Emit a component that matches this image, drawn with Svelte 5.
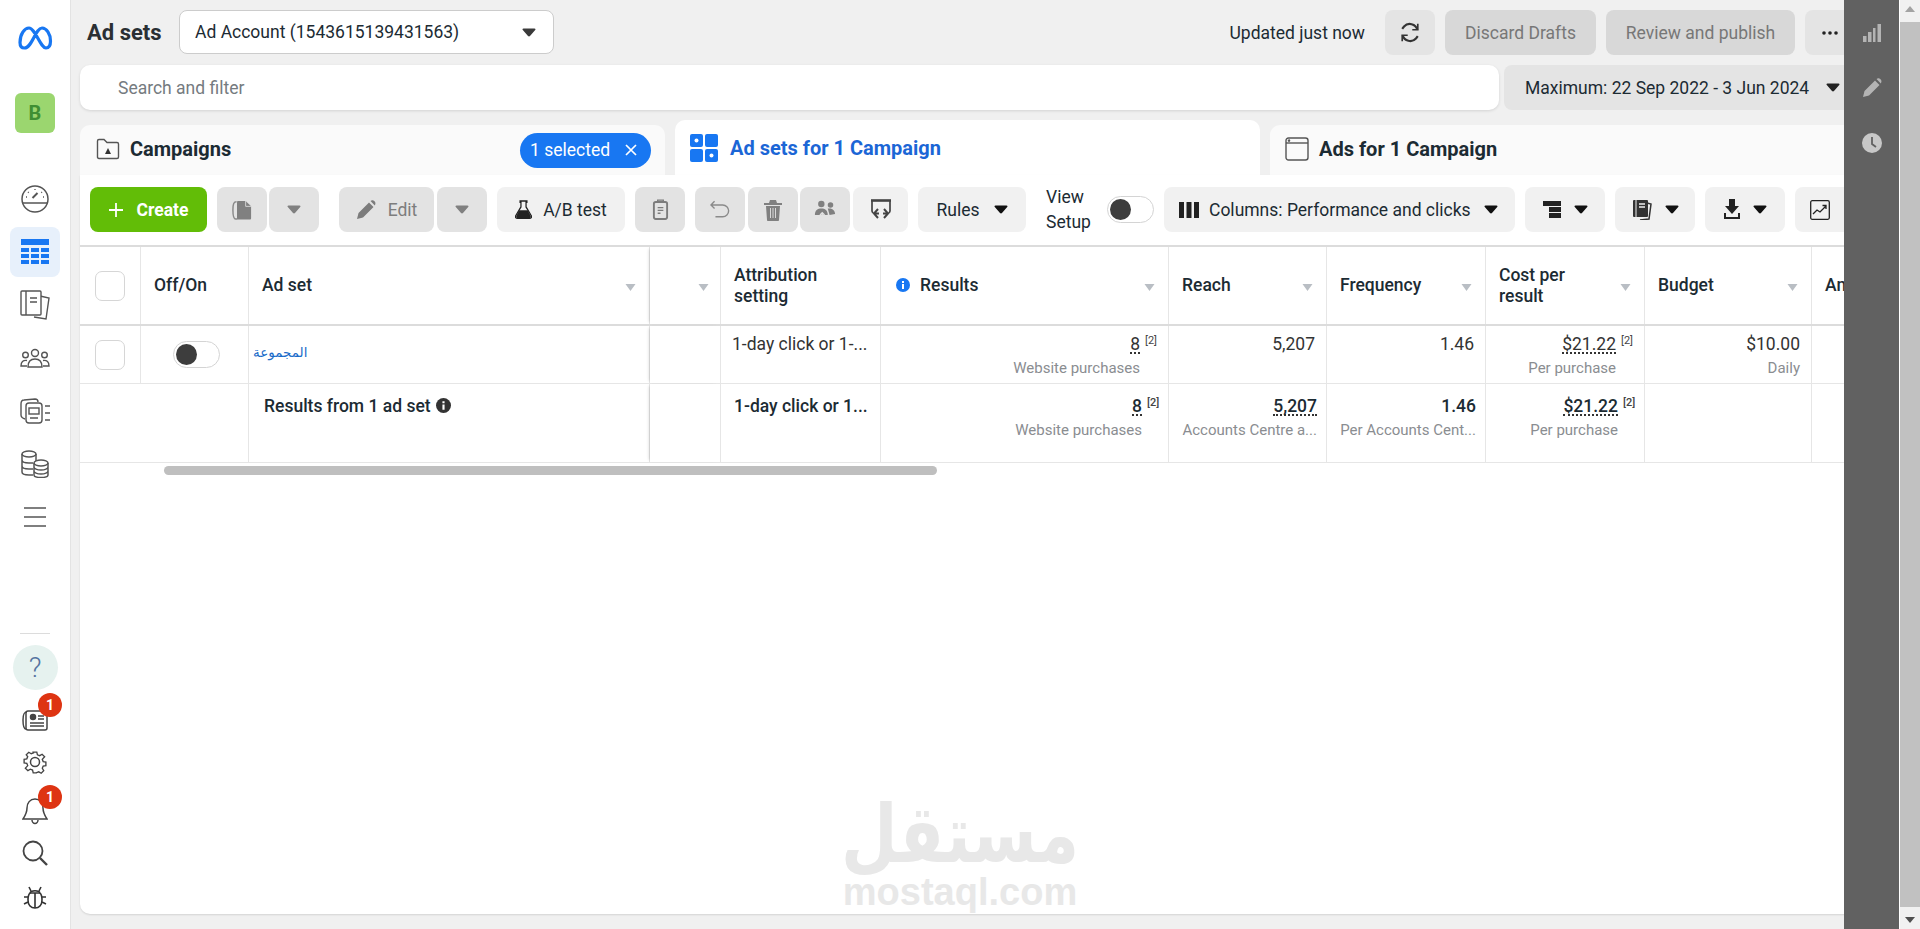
<script>
  const heads = [
    { label: '', cls: 'chk' },
    { label: 'Off/On', cls: 'off' },
    { label: 'Ad set', cls: 'adset', sort: true },
    { label: '', cls: 'hid', sort: true },
    { label: 'Attribution setting', cls: 'attr' },
    { label: 'Results', cls: 'res', info: true, sort: true },
    { label: 'Reach', cls: 'reach', sort: true },
    { label: 'Frequency', cls: 'freq', sort: true },
    { label: 'Cost per result', cls: 'cost', sort: true },
    { label: 'Budget', cls: 'budget', sort: true },
    { label: 'Amount spent', cls: 'amt' }
  ];
  const rowCells = [
    { v: '8', sub: 'Website purchases', sup: true },
    { v: '5,207', dotted: false },
    { v: '1.46' },
    { v: '$21.22', sub: 'Per purchase', sup: true },
    { v: '$10.00', sub: 'Daily' }
  ];
  const sumCells = [
    { v: '8', sub: 'Website purchases', sup: true },
    { v: '5,207', sub: 'Accounts Centre a...', dotted: true },
    { v: '1.46', sub: 'Per Accounts Cent...' },
    { v: '$21.22', sub: 'Per purchase', sup: true },
    { v: '' }
  ];
</script>

{#snippet caret(color)}
  <svg class="caret" viewBox="0 0 14 9" width="14" height="9"><path d="M1.5 0.5h11c1 0 1.3 .8 .7 1.5L8 8c-.5.6-1.500.6-2 0L.8 2C.2 1.300.5.500 1.500.500z" fill={color}/></svg>
{/snippet}

{#snippet sortCaret()}
  <svg class="sort" viewBox="0 0 11 7" width="11" height="7"><path d="M.5 0h10L5.500 7z" fill="#b9bec4"/></svg>
{/snippet}

{#snippet toggle()}
  <span class="toggle"><span class="knob"></span></span>
{/snippet}

<div class="root">
  <aside class="side">
    <svg class="meta" viewBox="0 0 36 24" width="36" height="24"><path d="M3 16.500C3 8 7.500 2 12 2c6 0 11.500 20 17 20 3 0 4.500-3 4.500-7C33.500 8 29.500 2 25 2 18.500 2 15 22 7.500 22 4.500 22 3 20 3 16.500z" fill="none" stroke="#1877f2" stroke-width="3.200"/></svg>
    <div class="tile">B</div>

    <nav class="navtop">
      <span class="nav"><svg viewBox="0 0 30 30" width="30" height="30" fill="none" stroke="#555" stroke-width="1.500"><circle cx="15" cy="15" r="13"/><path d="M3 19h24"/><path d="M12.500 14l5-5" stroke-width="2"/><path d="M15 5v1M8 8l.7.700M22 8l-.7.700M6 13h1M23 13h1" stroke-width="1.300"/></svg></span>
      <span class="nav active"><svg viewBox="0 0 28 26" width="28" height="26" fill="#1877f2"><rect y="0" width="28" height="6"/><rect y="9" width="8" height="4"/><rect x="10" y="9" width="8" height="4"/><rect x="20" y="9" width="8" height="4"/><rect y="15" width="8" height="4"/><rect x="10" y="15" width="8" height="4"/><rect x="20" y="15" width="8" height="4"/><rect y="21" width="8" height="4"/><rect x="10" y="21" width="8" height="4"/><rect x="20" y="21" width="8" height="4"/></svg></span>
      <span class="nav"><svg viewBox="0 0 30 30" width="30" height="30" fill="none" stroke="#555" stroke-width="1.400"><path d="M20 6l9 2-3 21-12-2"/><rect x="1" y="1" width="20" height="24" rx="1" fill="#fff"/><path d="M6 1v24M10 8h7M10 12h7"/></svg></span>
      <span class="nav"><svg viewBox="0 0 30 20" width="30" height="20" fill="none" stroke="#555" stroke-width="1.400"><circle cx="15" cy="5" r="3.500"/><circle cx="5.500" cy="7" r="2.800"/><circle cx="24.500" cy="7" r="2.800"/><path d="M8 19c0-6 3-8 7-8s7 2 7 8zM7 12.500C3 12 1 14 1 18h6M23 12.500c4-.5 6 1.500 6 5.500h-6"/></svg></span>
      <span class="nav"><svg viewBox="0 0 30 26" width="30" height="26" fill="none" stroke="#555" stroke-width="1.400"><path d="M5 21C2 20 1 19 1 17L1 6c0-3 1-4 3-4l11-1c2 0 3 1 3 3"/><rect x="6" y="5" width="16" height="20" rx="3" fill="#fff"/><rect x="9" y="10" width="10" height="6"/><path d="M10 20h8M25 8h5M25 15h5M25 22h5"/></svg></span>
      <span class="nav"><svg viewBox="0 0 28 28" width="28" height="28" fill="none" stroke="#555" stroke-width="1.500"><ellipse cx="8" cy="4" rx="7" ry="3"/><path d="M1 4v18c0 2 3 3 7 3h4M1 10c0 2 3 3 7 3h4M1 16c0 2 3 3 7 3h4M15 4v8"/><ellipse cx="20" cy="13" rx="7" ry="3" fill="#fff"/><path d="M13 13v12c0 1.500 3 2.500 7 2.500s7-1 7-2.500V13M13 17c0 1.500 3 3 7 3s7-1.500 7-3M13 21c0 1.500 3 3 7 3s7-1.500 7-3"/></svg></span>
      <span class="nav"><svg viewBox="0 0 24 20" width="24" height="20" fill="none" stroke="#555" stroke-width="1.400"><path d="M1 1h22M1 10h22M1 19h22"/></svg></span>
    </nav>

    <div class="navbot">
      <span class="rule"></span>
      <span class="help">?</span>
      <span class="nb nreports"><svg viewBox="0 0 28 26" width="28" height="26" fill="none" stroke="#444" stroke-width="1.500"><path d="M6 4C3 4 2 6 2 12s1 9 3 9"/><rect x="5" y="3" width="21" height="19" rx="2"/><circle cx="12" cy="9" r="2.500" fill="#444"/><path d="M17 8h6M17 11h6M9 15h14M9 18h14"/></svg><span class="badge">1</span></span>
      <span class="nb ngear"><svg viewBox="0 0 26 26" width="26" height="26" fill="none" stroke="#444" stroke-width="1.500"><circle cx="13" cy="13" r="4.500"/><path d="M11 2h4l.7 3 2.500 1 2.700-1.600 2.800 2.800L21.100 10l1 2.500 3 .5v4l-3 .5-1 2.500 1.600 2.700-2.800 2.800-2.700-1.600-2.500 1L15 25h-4l-.7-3-2.500-1-2.700 1.600-2.800-2.800L4.900 17l-1-2.500-3-.5v-4l3-.5 1-2.500L3.300 5l2.800-2.800L8.800 3.800l2.500-1z" transform="translate(1.300 1.300) scale(.9)"/></svg></span>
      <span class="nb nbell"><svg viewBox="0 0 26 28" width="26" height="28" fill="none" stroke="#444" stroke-width="1.500"><path d="M13 2c-5 0-8 4-8 9 0 5-2 8-4 11h24c-2-3-4-6-4-11 0-5-3-9-8-9z"/><path d="M10 23c0 2 1.500 3.500 3 3.500s3-1.500 3-3.500"/></svg><span class="badge b2">1</span></span>
      <span class="nb nsearch"><svg viewBox="0 0 26 26" width="26" height="26" fill="none" stroke="#444" stroke-width="1.800"><circle cx="11" cy="11" r="9.500"/><path d="M18 18l7 7" stroke-width="2.400"/></svg></span>
      <span class="nb nbug"><svg viewBox="0 0 24 24" width="24" height="24" fill="none" stroke="#333" stroke-width="1.600"><path d="M7 8c1-3 9-3 10 0 2 2 2 5 2 7 0 5-3 8-7 8s-7-3-7-8c0-2 0-5 2-7z"/><path d="M12 8v15M7 8h10M8 6L6 2M16 6l2-4M5 12H1M19 12h4M5 17l-4 2M19 17l4 2"/></svg></span>
    </div>
  </aside>

  <main class="main">
    <header class="topbar">
      <h1>Ad sets</h1>
      <div class="acct"><span>Ad Account (1543615139431563)</span>{@render caret('#3a3a3a')}</div>
      <div class="topright">
        <span class="updated">Updated just now</span>
        <span class="tb w50 g1"><svg viewBox="0 0 24 24" width="22" height="25" fill="none" stroke="#333" stroke-width="2.400"><path d="M20 9A8.500 8.500 0 0 0 5.500 5.500L3.500 8M4 15a8.500 8.500 0 0 0 14.500 3.500l2-2.500"/><path d="M20.500 2.500V9h-6M3.500 21.500V15h6" stroke-width="1.800"/></svg></span>
        <span class="tb dis discard">Discard Drafts</span>
        <span class="tb dis review">Review and publish</span>
        <span class="tb g1 more"><svg viewBox="0 0 16 4" width="16" height="4" fill="#222"><circle cx="2" cy="2" r="1.800"/><circle cx="8" cy="2" r="1.800"/><circle cx="14" cy="2" r="1.800"/></svg></span>
      </div>
    </header>

    <div class="searchrow">
      <div class="search">Search and filter</div>
      <div class="date"><span>Maximum: 22 Sep 2022 - 3 Jun 2024</span>{@render caret('#222')}</div>
    </div>

    <div class="tabs">
      <div class="tab campaigns">
        <svg viewBox="0 0 24 24" width="24" height="24" fill="none" stroke="#555" stroke-width="1.400"><path d="M1.500 4c0-1 .5-1.500 1.500-1.500h5l3 3h10c1 0 1.500.5 1.500 1.500v13c0 1-.5 1.500-1.500 1.500H3c-1 0-1.500-.5-1.500-1.500z"/><path d="M12 11l3 6H9z" fill="#333" stroke="none"/></svg>
        <span class="tabtxt">Campaigns</span>
        <span class="pill">1 selected<svg viewBox="0 0 12 12" width="12" height="12" stroke="#fff" stroke-width="1.700"><path d="M1 1l10 10M11 1L1 11"/></svg></span>
      </div>
      <div class="tab act">
        <svg viewBox="0 0 28 28" width="28" height="28"><g fill="#1877f2"><rect width="13" height="13" rx="2"/><rect x="15" width="13" height="13" rx="2"/><rect y="15" width="13" height="13" rx="2"/><rect x="15" y="15" width="13" height="13" rx="2"/></g><circle cx="6.500" cy="6.500" r="2" fill="#fff"/><circle cx="21.500" cy="21.500" r="2" fill="#fff"/></svg>
        <span class="tabtxt blue">Ad sets for 1 Campaign</span>
      </div>
      <div class="tab ads">
        <svg viewBox="0 0 24 24" width="24" height="24" fill="none" stroke="#555" stroke-width="1.400"><rect x="1" y="1" width="22" height="22" rx="2.500"/><path d="M1 6h22"/><circle cx="4" cy="3.600" r=".6" fill="#555"/></svg>
        <span class="tabtxt">Ads for 1 Campaign</span>
      </div>
    </div>

    <section class="card">
      <div class="toolbar">
        <button class="create"><svg viewBox="0 0 14 14" width="14" height="14" stroke="#fff" stroke-width="1.800"><path d="M7 0v14M0 7h14"/></svg>Create</button>
        <span class="grp">
          <span class="tb dim w50"><svg viewBox="0 0 22 24" width="20" height="22"><path d="M5 3C2 3 1 5 1 12s1 10 3 10h2" fill="none" stroke="#8a8a8a" stroke-width="1.600"/><path d="M7 2h8l6 6v13c0 1-.5 1.500-1.500 1.500H7c-1 0-1.500-.5-1.500-1.500V3.500C5.500 2.500 6 2 7 2z" fill="#808080"/><path d="M15 2v6h6" fill="none" stroke="#e3e3e3" stroke-width=".9"/></svg></span>
          <span class="tb dim w50 gap2">{@render caret('#808080')}</span>
        </span>
        <span class="grp g20">
          <span class="tb dim editb"><svg viewBox="0 0 20 20" width="20" height="20" fill="#7c7c7c"><path d="M1 19l1.500-6L13 2.500 17.500 7 7 17.500zM14.500 1l1-.500c1-.3 2-.2 3 .8s1.100 2 .8 3L18.800 5.500z"/></svg><span class="muted">Edit</span></span>
          <span class="tb dim w50 gap3">{@render caret('#808080')}</span>
        </span>
        <span class="tb g1 abt"><svg viewBox="0 0 20 22" width="17" height="21" fill="#222"><path d="M6 1h8v1.500h-1V8l6 10c1 2 0 3.500-2 3.500H3c-2 0-3-1.500-2-3.500L7 8V2.500H6z" fill="none" stroke="#222" stroke-width="1.500"/><path d="M5 12h10l3.500 6.500c.5 1.500-.5 2.500-1.500 2.500H3c-1 0-2-1-1.500-2.500z"/></svg>A/B test</span>
        <span class="tb dim w50 ml10"><svg viewBox="0 0 18 24" width="17" height="23" fill="none" stroke="#7c7c7c" stroke-width="2"><rect x="2" y="4" width="14" height="18" rx="2"/><path d="M6 4V2h6v2zM6 10h6M6 13h6M6 16h3" stroke-width="1.400"/></svg></span>
        <span class="grp ml10">
          <span class="tb dim w50"><svg viewBox="0 0 22 20" width="20" height="19" fill="none" stroke="#8a8a8a" stroke-width="1.500"><path d="M1 5h13a6.500 6.500 0 0 1 0 13H6M5 1L1 5l4 4"/></svg></span>
          <span class="tb dim w50 gap3"><svg viewBox="0 0 18 22" width="18" height="22" fill="#808080"><path d="M0 4h18v2H0zM6 1h6l1 3H5zM2 7h14l-1 14c0 .6-.5 1-1 1H4c-.5 0-1-.4-1-1z"/><path d="M6.500 9v10M9 9v10M11.500 9v10" stroke="#e3e3e3" stroke-width=".9"/></svg></span>
          <span class="tb dim w50 gap2"><svg viewBox="0 0 24 20" width="22" height="19" fill="#808080"><circle cx="8" cy="4" r="3.500"/><circle cx="18" cy="5" r="3"/><path d="M1 16c0-5 3-7 7-7s7 2 7 7zM15 9c5-1 8 2 8 6l-6 1z"/><path d="M9 20v-6M6.500 16L9 13.500 11.500 16" stroke="#e3e3e3" stroke-width="1.400" fill="none"/></svg></span>
          <span class="tb g1 swb gap3"><svg viewBox="0 0 22 22" width="22" height="22" fill="none" stroke="#444" stroke-width="1.700"><path d="M1 1.500h20" stroke-width="2.600"/><path d="M2 1v11c0 1 .5 1.500 1.500 2M20 1v11c0 1-.5 1.500-1.500 2"/><path d="M8 10l-4 4.500L8 19M14 10l4 4.500-4 4.500M4 14.500h5M13 14.500h5" stroke-width="2"/></svg></span>
        </span>
        <span class="tb g1 rules"><span>Rules</span>{@render caret('#111')}</span>
        <span class="vs">View<br/>Setup</span>
        {@render toggle()}
        <span class="tb g1 cols"><svg viewBox="0 0 20 16" width="20" height="16" fill="#222"><rect width="5" height="16"/><rect x="7.500" width="5" height="16"/><rect x="15" width="5" height="16"/></svg><span>Columns: Performance and clicks</span>{@render caret('#111')}</span>
        <span class="tb g1 w80 ml10"><svg viewBox="0 0 18 17" width="18" height="17" fill="#222"><rect width="18" height="5"/><rect x="6" y="6" width="12" height="5"/><rect x="6" y="12" width="12" height="5"/></svg>{@render caret('#111')}</span>
        <span class="tb g1 w80 ml10"><svg viewBox="0 0 20 20" width="20" height="20"><path d="M15 3l4 1-2 15-9 1" fill="none" stroke="#333" stroke-width="1.500"/><rect x="1" y="0" width="15" height="17" rx="1" fill="#333"/><path d="M7 4h6M7 7h6" stroke="#f1f1f1" stroke-width="1.500"/><path d="M4 0v17" stroke="#f1f1f1"/></svg>{@render caret('#111')}</span>
        <span class="tb g1 w80 ml10"><svg viewBox="0 0 16 21" width="16" height="21" fill="#222"><path d="M5 0h6v7h4l-7 8-7-8h4z"/><path d="M1 14v5h14v-5" fill="none" stroke="#222" stroke-width="2"/></svg>{@render caret('#111')}</span>
        <span class="tb g1 chart ml10"><svg viewBox="0 0 20 20" width="20" height="20" fill="none" stroke="#222" stroke-width="1.300"><rect x=".7" y=".7" width="18.600" height="18.600" rx="1.500"/><path d="M3 14l4-4 3 2 6-6M12.500 5.500H16v3.500"/></svg></span>
      </div>

      <div class="table">
        <div class="row headrow">
          {#each heads as h}
            <div class="cell h {h.cls}">
              {#if h.cls === 'chk'}<span class="cb"></span>{/if}
              {#if h.info}<svg class="info" viewBox="0 0 14 14" width="14" height="14"><circle cx="7" cy="7" r="7" fill="#1877f2"/><path d="M6 6h2v5H6zM6 3h2v2H6z" fill="#fff"/></svg>{/if}
              <span class="ht">{h.label}</span>
              {#if h.sort}{@render sortCaret()}{/if}
            </div>
          {/each}
        </div>

        <div class="row datarow">
          <div class="cell chk"><span class="cb"></span></div>
          <div class="cell off center">{@render toggle()}</div>
          <div class="cell adset"><a class="name" dir="rtl" href="#top">المجموعة</a></div>
          <div class="cell hid"></div>
          <div class="cell attr plain">1-day click or 1-...</div>
          {#each rowCells as c}
            <div class="cell num" class:pad={c.sup}>
              <span class="v"><span class:dot={c.sup}>{c.v}</span>{#if c.sup}<sup>[2]</sup>{/if}</span>
              {#if c.sub}<span class="sub">{c.sub}</span>{/if}
            </div>
          {/each}
          <div class="cell last"></div>
        </div>

        <div class="row sumrow">
          <div class="cell span2"></div>
          <div class="cell adset sumlabel">Results from 1 ad set <svg viewBox="0 0 14 14" width="15" height="15"><circle cx="7" cy="7" r="7" fill="#333"/><path d="M6 6h2v5H6zM6 3h2v2H6z" fill="#fff"/></svg></div>
          <div class="cell hid"></div>
          <div class="cell attr plain strong">1-day click or 1...</div>
          {#each sumCells as c}
            <div class="cell num s" class:pad={c.sup}>
              <span class="v"><span class:dot={c.sup || c.dotted}>{c.v}</span>{#if c.sup}<sup>[2]</sup>{/if}</span>
              {#if c.sub}<span class="sub">{c.sub}</span>{/if}
            </div>
          {/each}
          <div class="cell last"></div>
        </div>
      </div>
      <div class="hscroll"><span class="thumb"></span></div>

      <div class="watermark" aria-hidden="true">
        <span class="wa" dir="rtl">مستقل</span>
        <span class="wb">mostaql.com</span>
      </div>
    </section>
  </main>

  <aside class="panel">
    <svg viewBox="0 0 18 18" width="18" height="18" fill="#b4b4b4"><rect y="12" width="3.500" height="6"/><rect x="5" y="8" width="3.500" height="10"/><rect x="10" y="4" width="2.500" height="14"/><rect x="14.500" y="0" width="3.500" height="18"/></svg>
    <svg viewBox="0 0 20 20" width="20" height="20" fill="#b4b4b4"><path d="M1 19l1.500-6L13 2.500 17.500 7 7 17.500zM14.500 1l1-.500c1-.3 2-.2 3 .8s1.100 2 .8 3L18.800 5.500z"/></svg>
    <svg class="clock" viewBox="0 0 20 20" width="20" height="20"><circle cx="10" cy="10" r="10" fill="#c8c8c8"/><path d="M10 4v7l4 3" fill="none" stroke="#616161" stroke-width="1.800"/></svg>
  </aside>

  <div class="vbar">
    <span class="arrow up"></span>
    <span class="vthumb"></span>
    <span class="arrow down"></span>
  </div>
</div>

<style>
  :global(body) { margin: 0; background: #f0f0f0; overflow: hidden; }
  .root { display: flex; width: 1920px; height: 929px; font-family: Roboto, "Liberation Sans", sans-serif; color: #1c2b33; font-size: 17.5px; overflow: hidden; }
  svg { flex: none; display: block; }

  .side { width: 70px; flex: none; background: #fff; border-right: 1px solid #e3e3e3; display: flex; flex-direction: column; align-items: center; box-sizing: content-box; }
  .meta { margin-top: 26px; }
  .tile { width: 40px; height: 40px; margin-top: 43px; border-radius: 6px; background: #9bd66f; color: #3f8f33; font-weight: 700; font-size: 20px; display: flex; align-items: center; justify-content: center; }
  .navtop { display: flex; flex-direction: column; align-items: center; margin-top: 41px; }
  .nav { width: 50px; height: 50px; display: flex; align-items: center; justify-content: center; border-radius: 8px; margin-bottom: 3px; flex: none; }
  .nav.active { background: #e7f0fb; }
  .navbot { margin-top: auto; display: flex; flex-direction: column; align-items: center; padding-bottom: 10px; }
  .rule { width: 30px; height: 1px; background: #dcdcdc; margin-bottom: 11px; }
  .help { width: 45px; height: 45px; border-radius: 50%; background: #e6f2ef; color: #5572a0; font-size: 28px; font-weight: 300; display: flex; align-items: center; justify-content: center; }
  .nb { position: relative; width: 30px; height: 45px; display: flex; align-items: center; justify-content: center; }
  .nreports { margin-top: 8px; }
  .ngear { margin-top: -4px; }
  .nbell { margin-top: 4px; }
  .nsearch { margin-top: -3px; }
  .nbug { margin-top: -1px; }
  .badge { position: absolute; top: -5px; left: 18px; width: 24px; height: 24px; border-radius: 50%; background: #de3412; color: #fff; font-size: 14px; font-weight: 700; display: flex; align-items: center; justify-content: center; }
  .badge.b2 { top: -3px; }

  .main { flex: 1; min-width: 0; display: flex; flex-direction: column; overflow: hidden; padding-bottom: 15px; background: #f0f0f0; }
  .topbar { height: 55px; flex: none; display: flex; align-items: flex-start; padding: 10px 0 0 16px; box-sizing: border-box; }
  h1 { margin: 0; font-size: 22px; font-weight: 700; line-height: 46px; height: 45px; width: 92px; flex: none; color: #2a2f33; }
  .acct { width: 375px; height: 44px; box-sizing: border-box; background: #fff; border: 1px solid #ccc; border-radius: 8px; display: flex; align-items: center; justify-content: space-between; padding: 0 17px 0 15px; flex: none; }
  .topright { margin-left: auto; display: flex; align-items: center; margin-right: -11px; flex: none; }
  .updated { margin-right: 20px; }
  .tb { height: 45px; display: flex; align-items: center; justify-content: center; border-radius: 8px; box-sizing: border-box; flex: none; }
  .w50 { width: 50px; }
  .w80 { width: 80px; gap: 13px; }
  .g1 { background: #f1f1f1; }
  .topright .g1 { background: #e4e4e4; }
  .dim { background: #e3e3e3; }
  .dis { background: #d8d8d8; color: #777; }
  .discard { width: 151px; margin-left: 10px; }
  .review { width: 189px; margin-left: 10px; }
  .more { width: 50px; margin-left: 10px; }

  .searchrow { height: 45px; flex: none; display: flex; padding-left: 9px; margin-top: 10px; gap: 5px; }
  .search { flex: 1; background: #fff; border-radius: 10px; box-shadow: 0 1px 3px rgba(0,0,0,.12); display: flex; align-items: center; padding-left: 38px; color: #757b80; }
  .date { width: 356px; margin-right: -16px; background: #e4e4e4; border-radius: 8px; display: flex; align-items: center; gap: 17px; padding-left: 21px; box-sizing: border-box; flex: none; }

  .tabs { flex: none; display: flex; align-items: flex-end; padding-left: 9px; margin-top: 10px; height: 55px; }
  .tab { height: 50px; display: flex; align-items: center; background: #fafafa; border-radius: 10px 10px 0 0; box-sizing: border-box; gap: 10px; flex: none; padding-bottom: 2px; }
  .campaigns { width: 585px; padding: 0 14px 2px 16px; }
  .act { width: 585px; height: 55px; margin-left: 10px; background: #fff; padding: 0 15px; gap: 12px; }
  .ads { flex: 1; margin-left: 10px; padding-left: 15px; margin-right: -10px; }
  .tabtxt { font-weight: 700; color: #1c2b33; font-size: 20px; }
  .tabtxt.blue { color: #1b66d6; }
  .pill { margin-left: auto; margin-top: 2px; width: 131px; height: 35px; border-radius: 18px; background: #1877f2; color: #fff; font-size: 17.5px; display: flex; align-items: center; gap: 15px; padding-left: 10px; box-sizing: border-box; }

  .card { flex: 1; min-height: 0; margin-left: 9px; margin-right: -10px; background: #fff; border-radius: 0 0 10px 10px; box-shadow: 0 1px 2px rgba(0,0,0,.12); position: relative; display: flex; flex-direction: column; }
  .toolbar { height: 70px; flex: none; display: flex; align-items: center; padding: 12px 0 13px 10px; box-sizing: border-box; }
  .create { width: 117px; height: 45px; border: 0; padding: 0; border-radius: 8px; background: #62bd07; color: #fff; font: 700 17.5px Roboto, sans-serif; display: flex; align-items: center; justify-content: center; gap: 14px; flex: none; }
  .grp { display: flex; margin-left: 10px; flex: none; }
  .g20 { margin-left: 20px; }
  .ml10 { margin-left: 10px; }
  .gap2 { margin-left: 2px; }
  .gap3 { margin-left: 3px; }
  .editb { width: 95px; gap: 12px; }
  .muted { color: #7d7d7d; }
  .abt { width: 128px; margin-left: 10px; gap: 11px; }
  .swb { width: 55px; }
  .rules { width: 108px; margin-left: 10px; gap: 14px; }
  .vs { width: 61px; margin-left: 20px; line-height: 25px; flex: none; }
  .toggle { width: 47px; height: 27px; border: 1px solid #d4d4d4; border-radius: 14px; box-sizing: border-box; background: #fff; display: flex; align-items: center; padding-left: 2px; flex: none; }
  .knob { width: 21px; height: 21px; border-radius: 50%; background: #3d3d3d; }
  .cols { width: 351px; margin-left: 10px; gap: 10px; justify-content: flex-start; padding-left: 15px; }
  .cols span { margin-right: 3px; }
  .chart { width: 60px; padding-right: 10px; }

  .table { border-top: 2px solid #dcdcdc; flex: none; width: 1860px; }
  .row { display: grid; grid-template-columns: 61px 108px 401px 71px 160px 288px 158px 159px 159px 167px 128px; box-sizing: border-box; }
  .headrow { height: 79px; border-bottom: 2px solid #dcdcdc; }
  .datarow { height: 58px; border-bottom: 1px solid #e6e6e6; }
  .sumrow { height: 79px; border-bottom: 1px solid #e6e6e6; }
  .cell { border-right: 1px solid #e6e6e6; box-sizing: border-box; display: flex; padding: 0 11px; min-width: 0; position: relative; }
  .h { align-items: center; font-weight: 500; line-height: 20px; color: #1c2b33; padding-left: 13px; padding-bottom: 2px; }
  .chk { padding: 0 0 0 15px; align-items: center; }
  .cb { width: 30px; height: 30px; border: 1px solid #d6d6d6; border-radius: 7px; box-sizing: border-box; }
  .off { padding-left: 13px; }
  .center { padding: 0 0 0 3px; justify-content: center; align-items: center; }
  .hid { box-shadow: -3px 0 3px -2px rgba(0,0,0,.15); }
  .ht { display: block; }
  .attr.h, .cost.h { padding-bottom: 0; line-height: 21px; }
  .attr .ht { width: 100px; }
  .cost .ht { width: 80px; }
  .h.res { gap: 10px; padding-left: 15px; }
  .sort { position: absolute; right: 13px; top: 37px; }
  .hid .sort { right: 11px; }
  .adset { padding-left: 13px; }
  .name { font-family: "DejaVu Sans", sans-serif; color: #1a6cc9; font-size: 13.5px; text-decoration: none; margin: -6px 0 0 -9px; align-self: center; }
  .plain { padding-top: 8px; padding-left: 11px; line-height: 20px; color: #333; white-space: nowrap; }
  .strong { font-weight: 500; color: #1c2b33; padding-top: 12px; padding-left: 13px; }
  .num { flex-direction: column; align-items: flex-end; padding-top: 8px; }
  .num.pad { padding-right: 28px; }
  .v { line-height: 20px; color: #333; position: relative; white-space: nowrap; }
  .sub { font-size: 15px; color: #8a8d91; line-height: 20px; margin-top: 4px; white-space: nowrap; }
  .dot { border-bottom: 2px dotted #333; line-height: 15px; display: inline-block; }
  sup { font-size: 11px; line-height: 0; position: absolute; left: 100%; top: 7px; margin-left: 5px; color: #444; white-space: nowrap; }
  .num.s { padding-top: 12px; padding-right: 9px; }
  .num.s.pad { padding-right: 26px; }
  .s .v { font-weight: 500; color: #1c2b33; }
  .s .sub { font-weight: 400; }
  .span2 { grid-column: span 2; }
  .sumlabel { padding: 12px 0 0 15px; font-weight: 500; line-height: 20px; white-space: pre; }
  .sumlabel svg { margin-top: 2px; margin-left: 1px; }
  .last { border-right: 0; }
  .amt { overflow: hidden; white-space: nowrap; }
  .hscroll { height: 9px; margin-top: 3px; padding-left: 84px; flex: none; }
  .thumb { display: block; width: 773px; height: 9px; border-radius: 5px; background: #bfbfbf; }

  .watermark { position: absolute; left: 765px; top: 619px; width: 230px; display: flex; flex-direction: column; align-items: center; color: #e8e8e8; pointer-events: none; }
  .wa { font: 700 70px/80px "DejaVu Sans", sans-serif; transform: scale(.93, 1.15); }
  .wb { font: 700 38px/36px "Liberation Sans", sans-serif; }

  .panel { width: 55px; flex: none; background: #616161; display: flex; flex-direction: column; align-items: center; padding-top: 24px; box-sizing: border-box; gap: 36px; position: relative; z-index: 1; }
  .clock { margin-top: -1px; }
  .vbar { width: 21px; flex: none; background: #f1f1f1; display: flex; flex-direction: column; align-items: center; border-left: 1px solid #fff; box-sizing: border-box; }
  .vthumb { flex: 1; width: 100%; background: #c1c1c1; margin: 4px 0; }
  .arrow { width: 0; height: 0; border-left: 5px solid transparent; border-right: 5px solid transparent; margin: 6px 0; }
  .up { border-bottom: 6px solid #a3a3a3; }
  .down { border-top: 6px solid #505050; }
</style>
